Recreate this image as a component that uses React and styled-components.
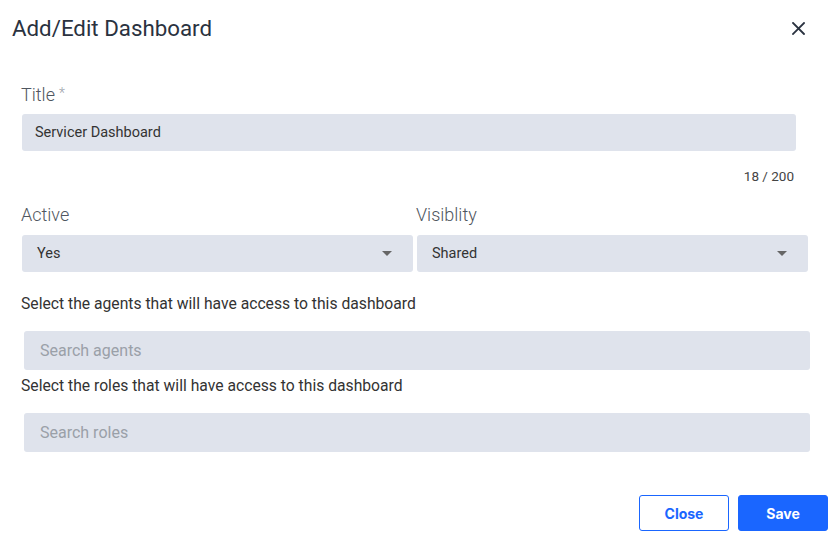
import React from "react";
import styled, { createGlobalStyle } from "styled-components";

const Global = createGlobalStyle`
  html, body { margin: 0; padding: 0; background: #fff; }
  body { font-family: Roboto, "Liberation Sans", sans-serif; }
  * { box-sizing: border-box; }
`;

const Modal = styled.div`
  width: 831px;
  height: 557px;
  background: #fff;
  display: flex;
  flex-direction: column;
`;

const Header = styled.div`
  height: 56px;
  display: flex;
  align-items: center;
  justify-content: space-between;
  padding: 0 26px 0 12px;
`;

const Heading = styled.h1`
  margin: 0;
  font-size: 22.3px;
  font-weight: 400;
  color: #2a3240;
  line-height: 30px;
`;

const CloseIcon = styled.button`
  border: 0;
  background: none;
  padding: 0;
  width: 13px;
  height: 13px;
  display: flex;
  cursor: pointer;
`;

const Body = styled.div`
  display: flex;
  flex-direction: column;
  padding: 0 0 0 21px;
`;

const Label = styled.label`
  display: block;
  font-size: 18px;
  line-height: 22px;
  color: #4f5660;
  font-weight: 300;
  margin-top: ${(p) => p.$top || 0}px;
`;

const Req = styled.span`
  color: #9ba1a9;
  font-size: 14px;
  margin-left: 4px;
  vertical-align: 3px;
`;

const Input = styled.div`
  margin-top: ${(p) => p.$top || 0}px;
  margin-left: ${(p) => p.$left || 1}px;
  width: ${(p) => p.$w}px;
  height: ${(p) => p.$h || 37}px;
  background: #dfe3ec;
  border-radius: 3px;
  display: flex;
  align-items: center;
  padding-left: ${(p) => p.$pad || 13}px;
  color: ${(p) => (p.$placeholder ? "#9aa0a8" : "#333")};
  font-size: ${(p) => (p.$placeholder ? 16 : 14.5)}px;
`;

const Counter = styled.div`
  margin-top: 17px;
  width: 773px;
  text-align: right;
  font-size: 13.5px;
  line-height: 16px;
  color: #444;
`;

const Row = styled.div`
  display: flex;
  gap: 4px;
  margin-top: 20px;
  margin-left: 1px;
`;

const Col = styled.div`
  width: 391px;
  display: flex;
  flex-direction: column;
`;

const ColLabel = styled(Label)`
  margin-left: -1px;
`;

const Select = styled.div`
  margin-top: 9px;
  height: 37px;
  background: #dfe3ec;
  border-radius: 3px;
  display: flex;
  align-items: center;
  justify-content: space-between;
  padding: 0 21px 0 15px;
  font-size: 14.5px;
  color: #333;
`;

const Caret = styled.span`
  width: 0;
  height: 0;
  border-left: 5px solid transparent;
  border-right: 5px solid transparent;
  border-top: 5px solid #666;
`;

const Help = styled.div`
  font-size: 15.7px;
  line-height: 20px;
  color: #333;
  margin-top: ${(p) => p.$top}px;
`;

const Footer = styled.div`
  display: flex;
  justify-content: flex-end;
  gap: 9px;
  padding-right: 3px;
  margin-top: 43px;
`;

const Button = styled.button`
  width: 90px;
  height: 36px;
  border-radius: 3px;
  font-family: Inter, Roboto, sans-serif;
  font-weight: 700;
  font-size: 14px;
  cursor: pointer;
  border: 1px solid #1a66ff;
  color: ${(p) => (p.$primary ? "#fff" : "#1a66ff")};
  background: ${(p) => (p.$primary ? "#1a66ff" : "#fff")};
`;

export default function App() {
  return (
    <>
      <Global />
      <Modal>
        <Header>
          <Heading>Add/Edit Dashboard</Heading>
          <CloseIcon aria-label="Close">
            <svg width="13" height="13" viewBox="0 0 13 13">
              <path d="M1 1L12 12M12 1L1 12" stroke="#2a3240" strokeWidth="1.8" strokeLinecap="square" />
            </svg>
          </CloseIcon>
        </Header>
        <Body>
          <Label $top={26}>
            Title<Req>*</Req>
          </Label>
          <Input $top={8} $w={774}>Servicer Dashboard</Input>
          <Counter>18 / 200</Counter>
          <Row>
            <Col>
              <ColLabel>Active</ColLabel>
              <Select>
                Yes
                <Caret />
              </Select>
            </Col>
            <Col>
              <ColLabel>Visiblity</ColLabel>
              <Select>
                Shared
                <Caret />
              </Select>
            </Col>
          </Row>
          <Help $top={22}>Select the agents that will have access to this dashboard</Help>
          <Input $top={17} $left={3} $w={786} $h={39} $pad={16} $placeholder>
            Search agents
          </Input>
          <Help $top={6}>Select the roles that will have access to this dashboard</Help>
          <Input $top={17} $left={3} $w={786} $h={39} $pad={16} $placeholder>
            Search roles
          </Input>
        </Body>
        <Footer>
          <Button>Close</Button>
          <Button $primary>Save</Button>
        </Footer>
      </Modal>
    </>
  );
}
